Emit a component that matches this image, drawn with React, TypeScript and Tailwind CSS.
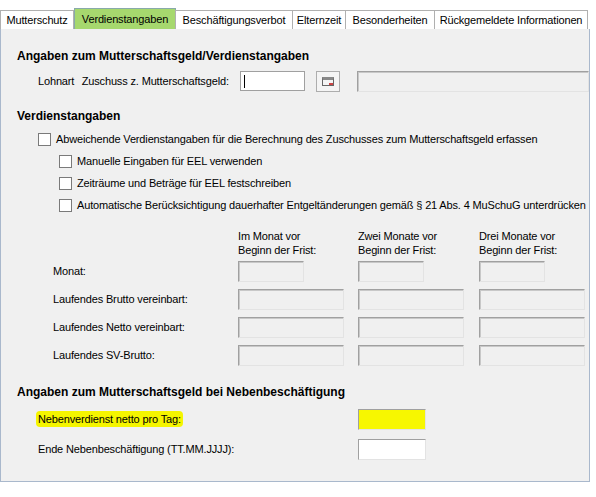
const font = { fontFamily: '"Liberation Sans", Arial, sans-serif' };

function Box({ w, bg = "bg-[#f0f0f0]" }: { w: string; bg?: string }) {
  return <div className={`${w} h-[21px] ${bg} border border-[#a0a0a0] border-r-[#e3e3e3] border-b-[#e3e3e3] shadow-[inset_1px_1px_0_#c8c8c8]`} />;
}

function Check({ label, indent }: { label: string; indent: string }) {
  return (
    <div className={`flex items-center gap-[5px] h-[22px] whitespace-nowrap ${indent}`}>
      <div className="w-[13px] h-[13px] shrink-0 bg-white border border-[#7a7a7a]" />
      <span>{label}</span>
    </div>
  );
}

const tabs: [string, string][] = [
  ["Mutterschutz", "w-[74px]"],
  ["Verdienstangaben", "w-[102px]"],
  ["Beschäftigungsverbot", "w-[118px]"],
  ["Elternzeit", "w-[54px]"],
  ["Besonderheiten", "w-[90px]"],
  ["Rückgemeldete Informationen", "w-[154px]"],
];

export default function App() {
  return (
    <div className="w-[596px] h-[497px] bg-white text-[11px] tracking-[-0.15px] text-black" style={font}>
      <div className="flex items-end h-[29px] pl-[1px]">
        {tabs.map(([t, w], i) =>
          i === 1 ? (
            <div key={t} className={`${w} h-[21px] bg-[#a6d86e] border border-b-0 border-[#8aa] flex items-center justify-center whitespace-nowrap`}>{t}</div>
          ) : (
            <div key={t} className={`${w} h-[19px] bg-white border border-b-0 border-[#b0b0b0] flex items-center justify-center whitespace-nowrap -ml-px`}>{t}</div>
          )
        )}
      </div>
      <div className="w-[590px] h-[453px] bg-[#f0f0f0] border border-t-0 border-[#a9b8cc] pl-[16px] pt-[18px]">
        <div className="font-bold text-[12px] tracking-normal">Angaben zum Mutterschaftsgeld/Verdienstangaben</div>
        <div className="flex items-center mt-[6px] h-[20px]">
          <span className="ml-[21px] w-[44px]">Lohnart</span>
          <span className="w-[159px] whitespace-nowrap">Zuschuss z. Mutterschaftsgeld:</span>
          <div className="w-[66px] h-[20px] bg-white border border-[#a0a0a0] flex items-center pl-[3px]"><div className="w-px h-[13px] bg-black" /></div>
          <div className="ml-[11px] w-[24px] h-[21px] bg-[#f4f4f4] border border-[#adadad] flex items-center justify-center">
            <div className="w-[12px] h-[9px] border border-[#666] border-t-[3px] border-t-[#888] relative">
              <div className="absolute right-0 bottom-0 w-[4px] h-[2px] bg-[#c44]" />
            </div>
          </div>
          <div className="ml-[17px]"><Box w="w-[232px]" /></div>
        </div>
        <div className="font-bold text-[12px] tracking-normal mt-[16px]">Verdienstangaben</div>
        <div className="mt-[3px]">
          <Check indent="ml-[21px]" label="Abweichende Verdienstangaben für die Berechnung des Zuschusses zum Mutterschaftsgeld erfassen" />
          <Check indent="ml-[42px]" label="Manuelle Eingaben für EEL verwenden" />
          <Check indent="ml-[42px]" label="Zeiträume und Beträge für EEL festschreiben" />
          <Check indent="ml-[42px]" label="Automatische Berücksichtigung dauerhafter Entgeltänderungen gemäß § 21 Abs. 4 MuSchuG unterdrücken" />
        </div>
        <div className="grid grid-cols-[221px_120px_121px_110px] mt-[13px] gap-y-[7px] items-center">
          <div />
          <div className="leading-[14px]">Im Monat vor<br />Beginn der Frist:</div>
          <div className="leading-[14px]">Zwei Monate vor<br />Beginn der Frist:</div>
          <div className="leading-[14px]">Drei Monate vor<br />Beginn der Frist:</div>
          <div className="pl-[36px] -mt-[3px]">Monat:</div>
          <Box w="w-[66px] -mt-[3px]" /><Box w="w-[66px] -mt-[3px]" /><Box w="w-[66px] -mt-[3px]" />
          {["Laufendes Brutto vereinbart:", "Laufendes Netto vereinbart:", "Laufendes SV-Brutto:"].map((l) => (
            <>
              <div key={l} className="pl-[36px]">{l}</div>
              <Box w="w-[106px]" /><Box w="w-[106px]" /><Box w="w-[106px]" />
            </>
          ))}
        </div>
        <div className="font-bold text-[12px] tracking-normal mt-[17px]">Angaben zum Mutterschaftsgeld bei Nebenbeschäftigung</div>
        <div className="grid grid-cols-[341px_70px] mt-[8px] gap-y-[9px] items-center">
          <div className="ml-[19px]"><span className="bg-[#f5f500] px-[2px] py-[2px] rounded-sm">Nebenverdienst netto pro Tag:</span></div>
          <div className="w-[68px] h-[21px] bg-[#f7f700] border border-[#a0a0a0] border-r-[#e3e3e3] border-b-[#e3e3e3]" />
          <div className="ml-[21px]">Ende Nebenbeschäftigung (TT.MM.JJJJ):</div>
          <div className="w-[68px] h-[21px] bg-white border border-[#a0a0a0] border-r-[#e3e3e3] border-b-[#e3e3e3]" />
        </div>
      </div>
    </div>
  );
}
